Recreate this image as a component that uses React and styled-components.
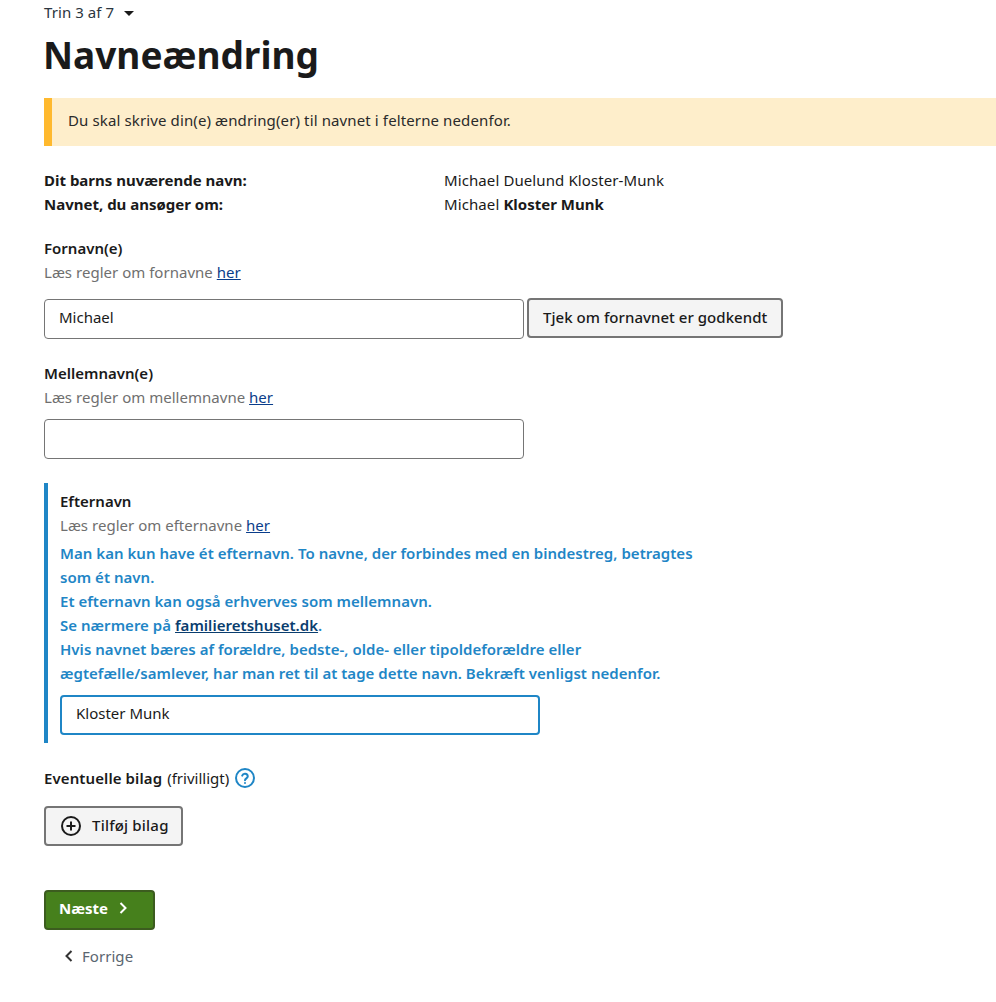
import React from "react";
import styled, { createGlobalStyle } from "styled-components";

const Global = createGlobalStyle`
  html, body { margin: 0; padding: 0; background: #fff; overflow-x: hidden; }
  body { font-family: "Noto Sans", "Open Sans", sans-serif; font-size: 15px; line-height: 24px; color: #1a1a1a; letter-spacing: 0.08px; }
  * { box-sizing: border-box; }
`;
const Page = styled.main`
  padding: 0 0 34px 44px;
  width: 996px;
  overflow: hidden;
`;
const StepToggle = styled.div`
  display: flex;
  align-items: center;
  gap: 10px;
  height: 24px;
  color: #2b3540;
`;
const Caret = styled.span`
  width: 0; height: 0;
  margin-top: 3px;
  border-left: 5px solid transparent;
  border-right: 5px solid transparent;
  border-top: 5px solid #1a1a1a;
`;
const Title = styled.h1`
  margin: 6px 0 19px -1px;
  font-size: 37px;
  line-height: 49px;
  font-weight: 700;
  letter-spacing: 0;
  color: #1a1a1a;
`;
const Alert = styled.div`
  height: 48px;
  margin-bottom: 22px;
  padding: 0 16px 4px;
  display: flex;
  align-items: center;
  background: #feeecb;
  border-left: 8px solid #ffb92e;
  color: #2a2a2a;
  letter-spacing: 0.12px;
`;
const Summary = styled.dl`
  display: grid;
  grid-template-columns: 400px 1fr;
  margin: 0 0 20px;
`;
const Term = styled.dt`font-weight: 700; letter-spacing: 0;`;
const Value = styled.dd`margin: 0; letter-spacing: 0.1px;`;
const Strong = styled.b`letter-spacing: 0;`;
const Label = styled.div`font-weight: 600; color: #1a1a1a; letter-spacing: 0;`;
const Hint = styled.div`color: #6f6f6f; letter-spacing: 0.02px;`;
const Link = styled.a`
  color: #0a3d8a;
  text-decoration: underline;
`;
const Field = styled.div`margin-bottom: ${p => p.$mb}px;`;
const InputRow = styled.div`
  display: flex;
  align-items: flex-start;
  gap: 3px;
  margin-top: ${p => p.$mt}px;
`;
const Input = styled.input`
  display: block;
  width: 480px;
  height: 40px;
  padding: 0 14px 4px;
  border-style: solid;
  border-color: ${p => p.$accent ? "#1f86c6" : "#757575"};
  border-width: ${p => p.$accent ? 2 : 1}px;
  border-radius: 4px;
  font: inherit;
  color: #1a1a1a;
  background: #fff;
  outline: none;
`;
const Button = styled.button`
  display: inline-flex;
  align-items: center;
  height: 40px;
  padding: 0 14px 3px;
  border: 2px solid #757575;
  border-radius: 4px;
  background: #f4f4f4;
  font: inherit;
  font-weight: 500;
  letter-spacing: 0.04px;
  color: #1a1a1a;
  margin-top: ${p => p.$mt || 0}px;
`;
const AddButton = styled(Button)`
  gap: 11px;
  padding: 0 12px 0 15px;
  letter-spacing: 0.2px;
`;
const AddLabel = styled.span`
  padding-bottom: 2px;
`;
const Highlight = styled.section`
  border-left: 4px solid #1f86c6;
  padding: 6px 0 8px 12px;
  margin-bottom: 23px;
`;
const Note = styled.div`
  width: 640px;
  margin: 4px 0 10px;
  font-weight: 600;
  color: #1f86c6;
  letter-spacing: 0.03px;
`;
const NoteLink = styled(Link)`color: #0a3d6e;`;
const BilagRow = styled.div`
  display: flex;
  align-items: center;
  gap: 5px;
  height: 24px;
`;
const Optional = styled.span`font-weight: 400; letter-spacing: 0;`;
const BilagLabel = styled.span`font-weight: 600; letter-spacing: 0.1px;`;
const NextButton = styled.button`
  display: flex;
  align-items: center;
  gap: 10px;
  height: 40px;
  width: 111px;
  margin-top: 44px;
  padding: 0 13px 4px;
  border: 2px solid #3c5c1f;
  border-radius: 4px;
  background: #46801c;
  color: #fff;
  font: inherit;
  font-weight: 700;
`;
const Back = styled.div`
  display: flex;
  align-items: center;
  gap: 8px;
  height: 24px;
  margin: 14px 0 0 20px;
  color: #5a6570;
  letter-spacing: 0.05px;
`;

const Help = () => (
  <svg width="22" height="22" viewBox="0 0 22 22" fill="none" stroke="#1f86c6" strokeWidth="2" strokeLinecap="round">
    <circle cx="11" cy="11" r="9" />
    <path d="M8.2 8.6a2.9 2.9 0 0 1 5.6.7c0 1.9-2.8 2.2-2.8 4" />
    <path d="M11 16v.1" />
  </svg>
);
const Plus = () => (
  <svg width="20" height="20" viewBox="0 0 20 20" fill="none" stroke="#1a1a1a" strokeWidth="2">
    <circle cx="10" cy="10" r="9" />
    <path d="M10 5.5v9M5.5 10h9" />
  </svg>
);
const Chevron = ({ dir = "right", color }) => (
  <svg width="10" height="14" viewBox="0 0 10 14" fill="none" stroke={color} strokeWidth="2">
    <path d={dir === "right" ? "M2.5 2l5 5-5 5" : "M7.5 2l-5 5 5 5"} />
  </svg>
);

export default function App() {
  return (
    <Page>
      <Global />
      <StepToggle>Trin 3 af 7 <Caret /></StepToggle>
      <Title>Navneændring</Title>
      <Alert>Du skal skrive din(e) ændring(er) til navnet i felterne nedenfor.</Alert>
      <Summary>
        <Term>Dit barns nuværende navn:</Term>
        <Value>Michael Duelund Kloster-Munk</Value>
        <Term>Navnet, du ansøger om:</Term>
        <Value>Michael <Strong>Kloster Munk</Strong></Value>
      </Summary>
      <Field $mb={22}>
        <Label>Fornavn(e)</Label>
        <Hint>Læs regler om fornavne <Link href="#">her</Link></Hint>
        <InputRow $mt={15}>
          <Input defaultValue="Michael" />
          <Button $mt={-1}>Tjek om fornavnet er godkendt</Button>
        </InputRow>
      </Field>
      <Field $mb={24}>
        <Label>Mellemnavn(e)</Label>
        <Hint>Læs regler om mellemnavne <Link href="#">her</Link></Hint>
        <InputRow $mt={10}>
          <Input />
        </InputRow>
      </Field>
      <Highlight>
        <Label>Efternavn</Label>
        <Hint>Læs regler om efternavne <Link href="#">her</Link></Hint>
        <Note>
          Man kan kun have ét efternavn. To navne, der forbindes med en bindestreg, betragtes som ét navn.<br />
          Et efternavn kan også erhverves som mellemnavn.<br />
          Se nærmere på <NoteLink href="#">familieretshuset.dk</NoteLink>.<br />
          Hvis navnet bæres af forældre, bedste-, olde- eller tipoldeforældre eller ægtefælle/samlever, har man ret til at tage dette navn. Bekræft venligst nedenfor.
        </Note>
        <Input $accent defaultValue="Kloster Munk" />
      </Highlight>
      <BilagRow>
        <BilagLabel>Eventuelle bilag</BilagLabel> <Optional>(frivilligt)</Optional> <Help />
      </BilagRow>
      <AddButton $mt={16}><Plus /> <AddLabel>Tilføj bilag</AddLabel></AddButton>
      <NextButton>Næste <Chevron color="#fff" /></NextButton>
      <Back><Chevron dir="left" color="#333" /> Forrige</Back>
    </Page>
  );
}
